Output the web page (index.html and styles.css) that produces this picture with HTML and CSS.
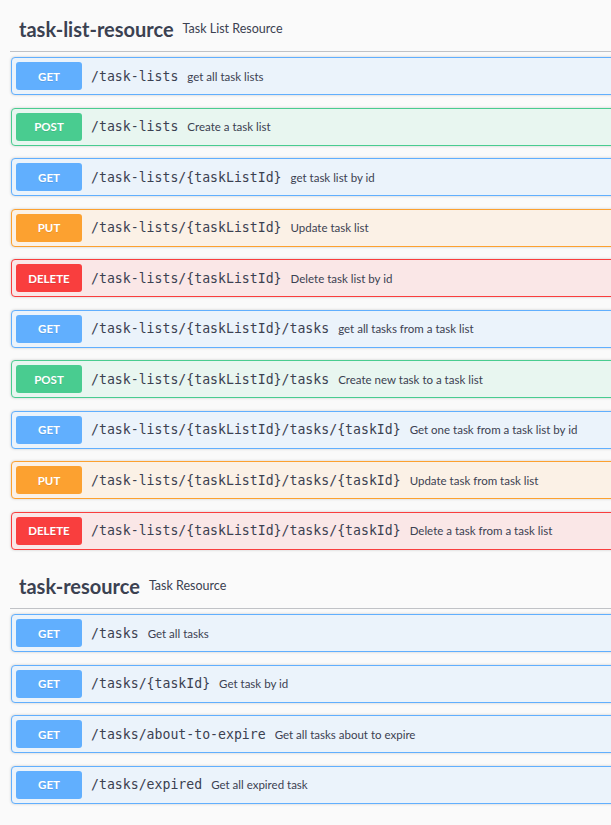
FILE: index.html
```html
<!DOCTYPE html>
<html lang="en">
<head>
<meta charset="utf-8">
<title>Swagger UI</title>
<link rel="stylesheet" href="styles.css">
</head>
<body>
<div class="page">
  <section class="tag-section">
    <h3 class="tag"><span class="tag-name">task-list-resource</span><small class="tag-desc">Task List Resource</small></h3>
    <div class="op op-get"><span class="method">GET</span><span class="path">/task-lists</span><span class="summary">get all task lists</span></div>
    <div class="op op-post"><span class="method">POST</span><span class="path">/task-lists</span><span class="summary">Create a task list</span></div>
    <div class="op op-get"><span class="method">GET</span><span class="path">/task-lists/{taskListId}</span><span class="summary">get task list by id</span></div>
    <div class="op op-put"><span class="method">PUT</span><span class="path">/task-lists/{taskListId}</span><span class="summary">Update task list</span></div>
    <div class="op op-delete"><span class="method">DELETE</span><span class="path">/task-lists/{taskListId}</span><span class="summary">Delete task list by id</span></div>
    <div class="op op-get"><span class="method">GET</span><span class="path">/task-lists/{taskListId}/tasks</span><span class="summary">get all tasks from a task list</span></div>
    <div class="op op-post"><span class="method">POST</span><span class="path">/task-lists/{taskListId}/tasks</span><span class="summary">Create new task to a task list</span></div>
    <div class="op op-get"><span class="method">GET</span><span class="path">/task-lists/{taskListId}/tasks/{taskId}</span><span class="summary">Get one task from a task list by id</span></div>
    <div class="op op-put"><span class="method">PUT</span><span class="path">/task-lists/{taskListId}/tasks/{taskId}</span><span class="summary">Update task from task list</span></div>
    <div class="op op-delete"><span class="method">DELETE</span><span class="path">/task-lists/{taskListId}/tasks/{taskId}</span><span class="summary">Delete a task from a task list</span></div>
  </section>
  <section class="tag-section">
    <h3 class="tag"><span class="tag-name">task-resource</span><small class="tag-desc">Task Resource</small></h3>
    <div class="op op-get"><span class="method">GET</span><span class="path">/tasks</span><span class="summary">Get all tasks</span></div>
    <div class="op op-get"><span class="method">GET</span><span class="path">/tasks/{taskId}</span><span class="summary">Get task by id</span></div>
    <div class="op op-get"><span class="method">GET</span><span class="path">/tasks/about-to-expire</span><span class="summary">Get all tasks about to expire</span></div>
    <div class="op op-get"><span class="method">GET</span><span class="path">/tasks/expired</span><span class="summary">Get all expired task</span></div>
  </section>
</div>
</body>
</html>
```
FILE: styles.css
```css
html, body {
  margin: 0;
  padding: 0;
  background: #fafafa;
  overflow: hidden;
}

.page {
  width: 660px;
  padding: 5px 0 0 10px;
  font-family: Lato, "Open Sans", sans-serif;
  color: #3b4151;
}

.tag {
  display: flex;
  align-items: center;
  box-sizing: border-box;
  height: 47px;
  margin: 0 0 5px;
  padding: 1px 0 0 9px;
  border-bottom: 1px solid rgba(59, 65, 81, 0.3);
}

.tag-name {
  font-family: Lato, sans-serif;
  font-weight: 700;
  font-size: 20px;
  color: #3b4151;
}

.tag-desc {
  margin-left: 9px;
  font-family: Lato, sans-serif;
  font-weight: 400;
  font-size: 12.5px;
  color: #3b4151;
}

.op {
  display: flex;
  align-items: center;
  box-sizing: border-box;
  height: 38px;
  margin: 0 0 12.5px 1px;
  padding: 0 4px;
  border: 1px solid;
  border-radius: 4px;
  box-shadow: 0 0 3px rgba(0, 0, 0, 0.19);
}

.method {
  display: flex;
  align-items: center;
  justify-content: center;
  flex: none;
  width: 66px;
  height: 28px;
  border-radius: 3px;
  color: #fff;
  font-family: Lato, sans-serif;
  font-weight: 700;
  font-size: 11.5px;
  text-shadow: 0 1px 0 rgba(0, 0, 0, 0.1);
}

.path {
  margin-left: 9px;
  font-family: "DejaVu Sans Mono", monospace;
  font-size: 13.2px;
  color: #3b4151;
}

.summary {
  margin-left: 9px;
  font-family: Lato, sans-serif;
  font-size: 11.5px;
  color: #3b4151;
}

.op-get { background: #ebf3fb; border-color: #61affe; }
.op-get .method { background: #61affe; }
.op-post { background: #e8f6f0; border-color: #49cc90; }
.op-post .method { background: #49cc90; }
.op-put { background: #fbf1e6; border-color: #fca130; }
.op-put .method { background: #fca130; }
.op-delete { background: #fae7e7; border-color: #f93e3e; }
.op-delete .method { background: #f93e3e; }
```
